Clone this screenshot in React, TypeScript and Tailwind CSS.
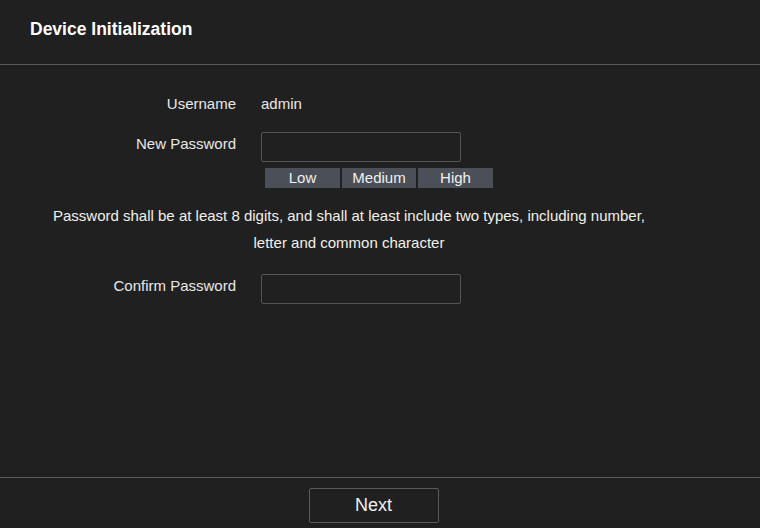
export default function App() {
  const font = { fontFamily: '"Liberation Sans", Arial, sans-serif' };
  return (
    <div className="w-[760px] h-[528px] bg-[#202020] flex flex-col text-[#e8e8e8]" style={font}>
      <div className="h-[65px] border-b border-[#5a5a5a] pl-[30px] pt-[18px] shrink-0">
        <div className="text-[17.5px] leading-[22px] font-bold text-white">Device Initialization</div>
      </div>
      <div className="flex-1 flex flex-col">
        <div className="flex mt-[29px] text-[15px] leading-[20px]">
          <div className="w-[236px] text-right">Username</div>
          <div className="ml-[25px]">admin</div>
        </div>
        <div className="flex mt-[18px] text-[15px]">
          <div className="w-[236px] text-right leading-[22px] pt-[1px]">New Password</div>
          <div className="ml-[25px] flex flex-col">
            <div className="w-[200px] h-[30px] border border-[#555] rounded-[2px] bg-[#202020]"></div>
            <div className="flex gap-[2px] mt-[6px] ml-[4px] h-[20px]">
              <div className="w-[75px] bg-[#4b4f57] text-center leading-[20px] text-[#f0f0f0]">Low</div>
              <div className="w-[74px] bg-[#4b4f57] text-center leading-[20px] text-[#f0f0f0]">Medium</div>
              <div className="w-[75px] bg-[#4b4f57] text-center leading-[20px] text-[#f0f0f0]">High</div>
            </div>
          </div>
        </div>
        <div className="w-[698px] text-center text-[15px] leading-[27px] mt-[14px] text-[#f0f0ea]">
          Password shall be at least 8 digits, and shall at least include two types, including number,
          <br />
          letter and common character
        </div>
        <div className="flex mt-[18px] text-[15px]">
          <div className="w-[236px] text-right leading-[22px] pt-[1px]">Confirm Password</div>
          <div className="ml-[25px]">
            <div className="w-[200px] h-[30px] border border-[#555] rounded-[2px] bg-[#202020]"></div>
          </div>
        </div>
      </div>
      <div className="h-[51px] border-t border-[#5a5a5a] shrink-0 flex justify-center pt-[10px]">
        <div className="ml-[-13px] w-[130px] h-[35px] border border-[#5a5a5a] rounded-[2px] flex items-center justify-center text-[18px] text-[#f0f0f0]">
          Next
        </div>
      </div>
    </div>
  );
}
